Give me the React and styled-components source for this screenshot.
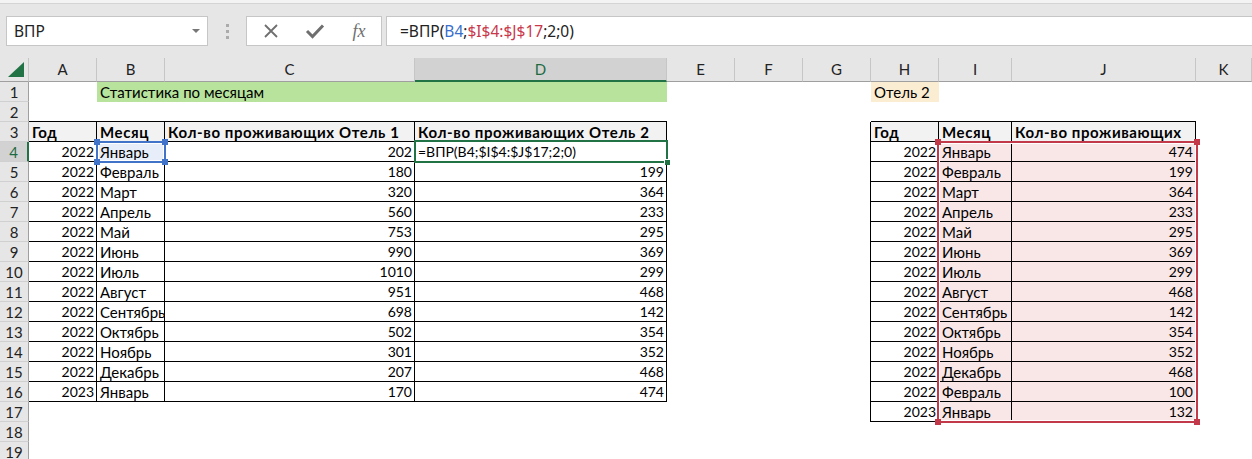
import React from "react";
import styled, { createGlobalStyle } from "styled-components";

// ----------------------------------------------------------
// data

const COLS = ["A", "B", "C", "D", "E", "F", "G", "H", "I", "J", "K"];

const GREEN = "#b7e39c";
const ORANGE = "#fbedd2";
const HEAD = "#f2f2f2";
const PINK = "#f9e7e7";
const BLUEFILL = "#e8eef9";

const FORMULA = "=ВПР(B4;$I$4:$J$17;2;0)";

const left = [
  [2022, "Январь", 202, FORMULA],
  [2022, "Февраль", 180, 199],
  [2022, "Март", 320, 364],
  [2022, "Апрель", 560, 233],
  [2022, "Май", 753, 295],
  [2022, "Июнь", 990, 369],
  [2022, "Июль", 1010, 299],
  [2022, "Август", 951, 468],
  [2022, "Сентябрь", 698, 142],
  [2022, "Октябрь", 502, 354],
  [2022, "Ноябрь", 301, 352],
  [2022, "Декабрь", 207, 468],
  [2023, "Январь", 170, 474],
];

const right = [
  [2022, "Январь", 474],
  [2022, "Февраль", 199],
  [2022, "Март", 364],
  [2022, "Апрель", 233],
  [2022, "Май", 295],
  [2022, "Июнь", 369],
  [2022, "Июль", 299],
  [2022, "Август", 468],
  [2022, "Сентябрь", 142],
  [2022, "Октябрь", 354],
  [2022, "Ноябрь", 352],
  [2022, "Декабрь", 468],
  [2022, "Февраль", 100],
  [2023, "Январь", 132],
];

const num = v => typeof v === "number";

const buildRow = r => {
  const row = {};

  if (r === 1) {
    row.B = { v: "Статистика по месяцам", span: 3, fill: GREEN };
    row.H = { v: "Отель 2", fill: ORANGE };
  }

  if (r === 3) {
    ["Год", "Месяц", "Кол-во проживающих Отель 1", "Кол-во проживающих Отель 2"].forEach(
      (v, i) => (row[COLS[i]] = { v, bold: true, fill: HEAD, box: true, top: true })
    );
    ["Год", "Месяц", "Кол-во проживающих"].forEach(
      (v, i) =>
        (row[COLS[i + 7]] = { v, bold: true, fill: HEAD, box: true, top: true, left: i === 0 })
    );
  }

  const l = left[r - 4];
  if (l) {
    l.forEach((v, i) => {
      row[COLS[i]] = { v, right: num(v), small: num(v) || v === FORMULA, box: true };
    });
    if (r === 4) row.B.fill = BLUEFILL;
  }

  const rr = right[r - 4];
  if (rr) {
    rr.forEach((v, i) => {
      row[COLS[i + 7]] = {
        v,
        right: num(v),
        small: num(v),
        box: true,
        left: i === 0,
        fill: i > 0 ? PINK : null,
      };
    });
  }

  return row;
};

const ROWS = Array.from({ length: 19 }, (_, i) => i + 1);

// ////////////////////////////////////////////////////////////

const App = () => {
  return (
    <>
      <GlobalStyle />
      <TopStrip />

      <FormulaBar>
        <NameBox>
          <span>ВПР</span>
          <Caret />
        </NameBox>

        <Grip>
          <i />
          <i />
          <i />
        </Grip>

        <FxGroup>
          <IconBox>
            <svg width="18" height="18" viewBox="0 0 18 18">
              <path d="M3 3 L15 15 M15 3 L3 15" stroke="#6f6f6f" strokeWidth="1.8" fill="none" />
            </svg>
          </IconBox>
          <IconBox>
            <svg width="20" height="18" viewBox="0 0 20 18">
              <path d="M2 9 L7.5 14.5 L18 3.5" stroke="#6f6f6f" strokeWidth="3" fill="none" />
            </svg>
          </IconBox>
          <Fx>fx</Fx>
        </FxGroup>

        <FormulaInput>
          <span>=ВПР(</span>
          <Ref $color="#3a6fcb">B4</Ref>
          <span>;</span>
          <Ref $color="#c9374a">$I$4:$J$17</Ref>
          <span>;2;0)</span>
        </FormulaInput>
      </FormulaBar>

      <Sheet>
        <Corner>
          <svg width="16" height="15" viewBox="0 0 16 15">
            <polygon points="16,0 16,15 0,15" fill="#217346" />
          </svg>
        </Corner>

        {COLS.map(c => (
          <ColHead key={c} $sel={c === "D"}>
            {c}
          </ColHead>
        ))}

        {ROWS.map(r => {
          const row = buildRow(r);
          const out = [
            <RowHead key={`h-${r}`} $sel={r === 4}>
              {r}
            </RowHead>,
          ];
          let skip = 0;

          COLS.forEach(c => {
            if (skip > 0) {
              skip--;
              return;
            }
            const cell = row[c] || {};
            if (cell.span) skip = cell.span - 1;

            out.push(
              <Cell
                key={`${c}${r}`}
                $span={cell.span}
                $fill={cell.fill}
                $bold={cell.bold}
                $right={cell.right}
                $small={cell.small}
                $box={cell.box}
                $top={cell.top}
                $left={cell.left}
              >
                {cell.v}
              </Cell>
            );
          });

          return out;
        })}

        <RefBox $color="#4174c9" $x={96} $y={83} $w={70} $h={22}>
          <Handle $color="#4174c9" $pos="tl" />
          <Handle $color="#4174c9" $pos="tr" />
          <Handle $color="#4174c9" $pos="bl" />
          <Handle $color="#4174c9" $pos="br" />
        </RefBox>

        <RefBox $color="#c2394a" $x={937} $y={83} $w={261} $h={282}>
          <Handle $color="#c2394a" $pos="tl" />
          <Handle $color="#c2394a" $pos="tr" />
          <Handle $color="#c2394a" $pos="bl" />
          <Handle $color="#c2394a" $pos="br" />
        </RefBox>

        <Active>
          <FillHandle />
        </Active>
      </Sheet>
    </>
  );
};

export default App;

// ----------------------------------------------------------
// styles

const GlobalStyle = createGlobalStyle`
  html, body {
    margin: 0;
    padding: 0;
    background: #fff;
    overflow: hidden;
  }
  #root {
    width: 1252px;
    height: 459px;
    overflow: hidden;
  }
`;

const TopStrip = styled.div`
  height: 3px;
  background: #f3f3f3;
  border-bottom: 1px solid #d4d4d4;
`;

const FormulaBar = styled.div`
  height: 54px;
  box-sizing: border-box;
  padding-top: 12px;
  background: #e6e6e6;
  display: flex;
  align-items: flex-start;
  font-family: "Noto Sans", "Open Sans", sans-serif;
  font-size: 15.5px;
  color: #222;
`;

const NameBox = styled.div`
  margin-left: 6px;
  width: 202px;
  height: 30px;
  box-sizing: border-box;
  background: #fff;
  border: 1px solid #c6c6c6;
  display: flex;
  align-items: center;
  justify-content: space-between;
  padding: 0 7px 0 7px;
`;

const Caret = styled.span`
  width: 0;
  height: 0;
  border-left: 4px solid transparent;
  border-right: 4px solid transparent;
  border-top: 4px solid #777;
`;

const Grip = styled.div`
  margin-left: 18px;
  width: 4px;
  height: 30px;
  display: flex;
  flex-direction: column;
  justify-content: center;
  gap: 3px;

  i {
    display: block;
    width: 3px;
    height: 3px;
    background: #ababab;
  }
`;

const FxGroup = styled.div`
  margin-left: 16px;
  width: 136px;
  height: 30px;
  box-sizing: border-box;
  background: #fff;
  border: 1px solid #c6c6c6;
  display: flex;
  align-items: center;
  padding-left: 14px;
  gap: 24px;
`;

const IconBox = styled.span`
  width: 20px;
  height: 20px;
  display: flex;
  align-items: center;
  justify-content: center;
`;

const Fx = styled.span`
  width: 20px;
  text-align: center;
  font-family: "Liberation Serif", "DejaVu Serif", serif;
  font-style: italic;
  font-size: 18px;
  color: #6f6f6f;
`;

const FormulaInput = styled.div`
  margin-left: 4px;
  flex: 1;
  height: 30px;
  box-sizing: border-box;
  background: #fff;
  border: 1px solid #c6c6c6;
  border-right: none;
  display: flex;
  align-items: center;
  padding-left: 13px;
  white-space: pre;
`;

const Ref = styled.span`
  color: ${p => p.$color};
`;

const Sheet = styled.div`
  position: relative;
  display: grid;
  grid-template-columns: 29px 68px 68px 250px 252px 68px 68px 68px 68px 73px 184px 1fr;
  grid-template-rows: 24px repeat(19, 20px);
  font-family: "Lato", "Carlito", "Noto Sans", sans-serif;
`;

const Corner = styled.div`
  background: #e6e6e6;
  border-right: 1px solid #c6c6c6;
  border-bottom: 1px solid #9f9f9f;
  display: flex;
  align-items: flex-end;
  justify-content: flex-end;
  padding: 0 4px 4px 0;
`;

const ColHead = styled.div`
  box-sizing: border-box;
  background: ${p => (p.$sel ? "#d2d2d2" : "#e6e6e6")};
  border-right: 1px solid #c6c6c6;
  border-bottom: ${p => (p.$sel ? "2px solid #217346" : "1px solid #9f9f9f")};
  color: ${p => (p.$sel ? "#1e6b43" : "#222")};
  font-size: 15px;
  line-height: 23px;
  text-align: center;
`;

const RowHead = styled.div`
  box-sizing: border-box;
  background: ${p => (p.$sel ? "#d2d2d2" : "#e6e6e6")};
  border-right: ${p => (p.$sel ? "2px solid #217346" : "1px solid #9f9f9f")};
  border-bottom: 1px solid #d0d0d0;
  color: ${p => (p.$sel ? "#1e6b43" : "#222")};
  font-size: 15px;
  line-height: 20px;
  text-align: center;
`;

const shadows = p => {
  const list = [];
  if (p.$top) list.push("0 -1px 0 #000");
  if (p.$left) list.push("-1px 0 0 #000");
  return list.length ? list.join(", ") : "none";
};

const Cell = styled.div`
  grid-column: ${p => (p.$span ? `span ${p.$span}` : "auto")};
  box-sizing: border-box;
  background: ${p => p.$fill || "#fff"};
  border-right: ${p => (p.$box ? "1px solid #000" : "none")};
  border-bottom: ${p => (p.$box ? "1px solid #000" : "none")};
  box-shadow: ${shadows};
  padding: 0 2px 0 3px;
  overflow: hidden;
  white-space: nowrap;
  text-align: ${p => (p.$right ? "right" : "left")};
  font-size: ${p => (p.$small ? "14px" : "15px")};
  font-weight: ${p => (p.$bold ? 700 : 400)};
  letter-spacing: ${p => (p.$bold ? "0.6px" : "normal")};
  line-height: 20px;
  color: #000;
`;

const RefBox = styled.div`
  position: absolute;
  left: ${p => p.$x}px;
  top: ${p => p.$y}px;
  width: ${p => p.$w}px;
  height: ${p => p.$h}px;
  box-sizing: border-box;
  border: 2px solid ${p => p.$color};
  box-shadow: inset 0 0 0 1px #fff;
`;

const corner = {
  tl: "left: -4px; top: -4px;",
  tr: "right: -4px; top: -4px;",
  bl: "left: -4px; bottom: -4px;",
  br: "right: -4px; bottom: -4px;",
};

const Handle = styled.span`
  position: absolute;
  ${p => corner[p.$pos]}
  width: 6px;
  height: 6px;
  background: ${p => p.$color};
`;

const Active = styled.div`
  position: absolute;
  left: 414px;
  top: 82px;
  width: 254px;
  height: 23px;
  box-sizing: border-box;
  border: 2px solid #217346;
`;

const FillHandle = styled.span`
  position: absolute;
  right: -4px;
  bottom: -4px;
  width: 5px;
  height: 5px;
  background: #217346;
  border-left: 1px solid #fff;
  border-top: 1px solid #fff;
`;
